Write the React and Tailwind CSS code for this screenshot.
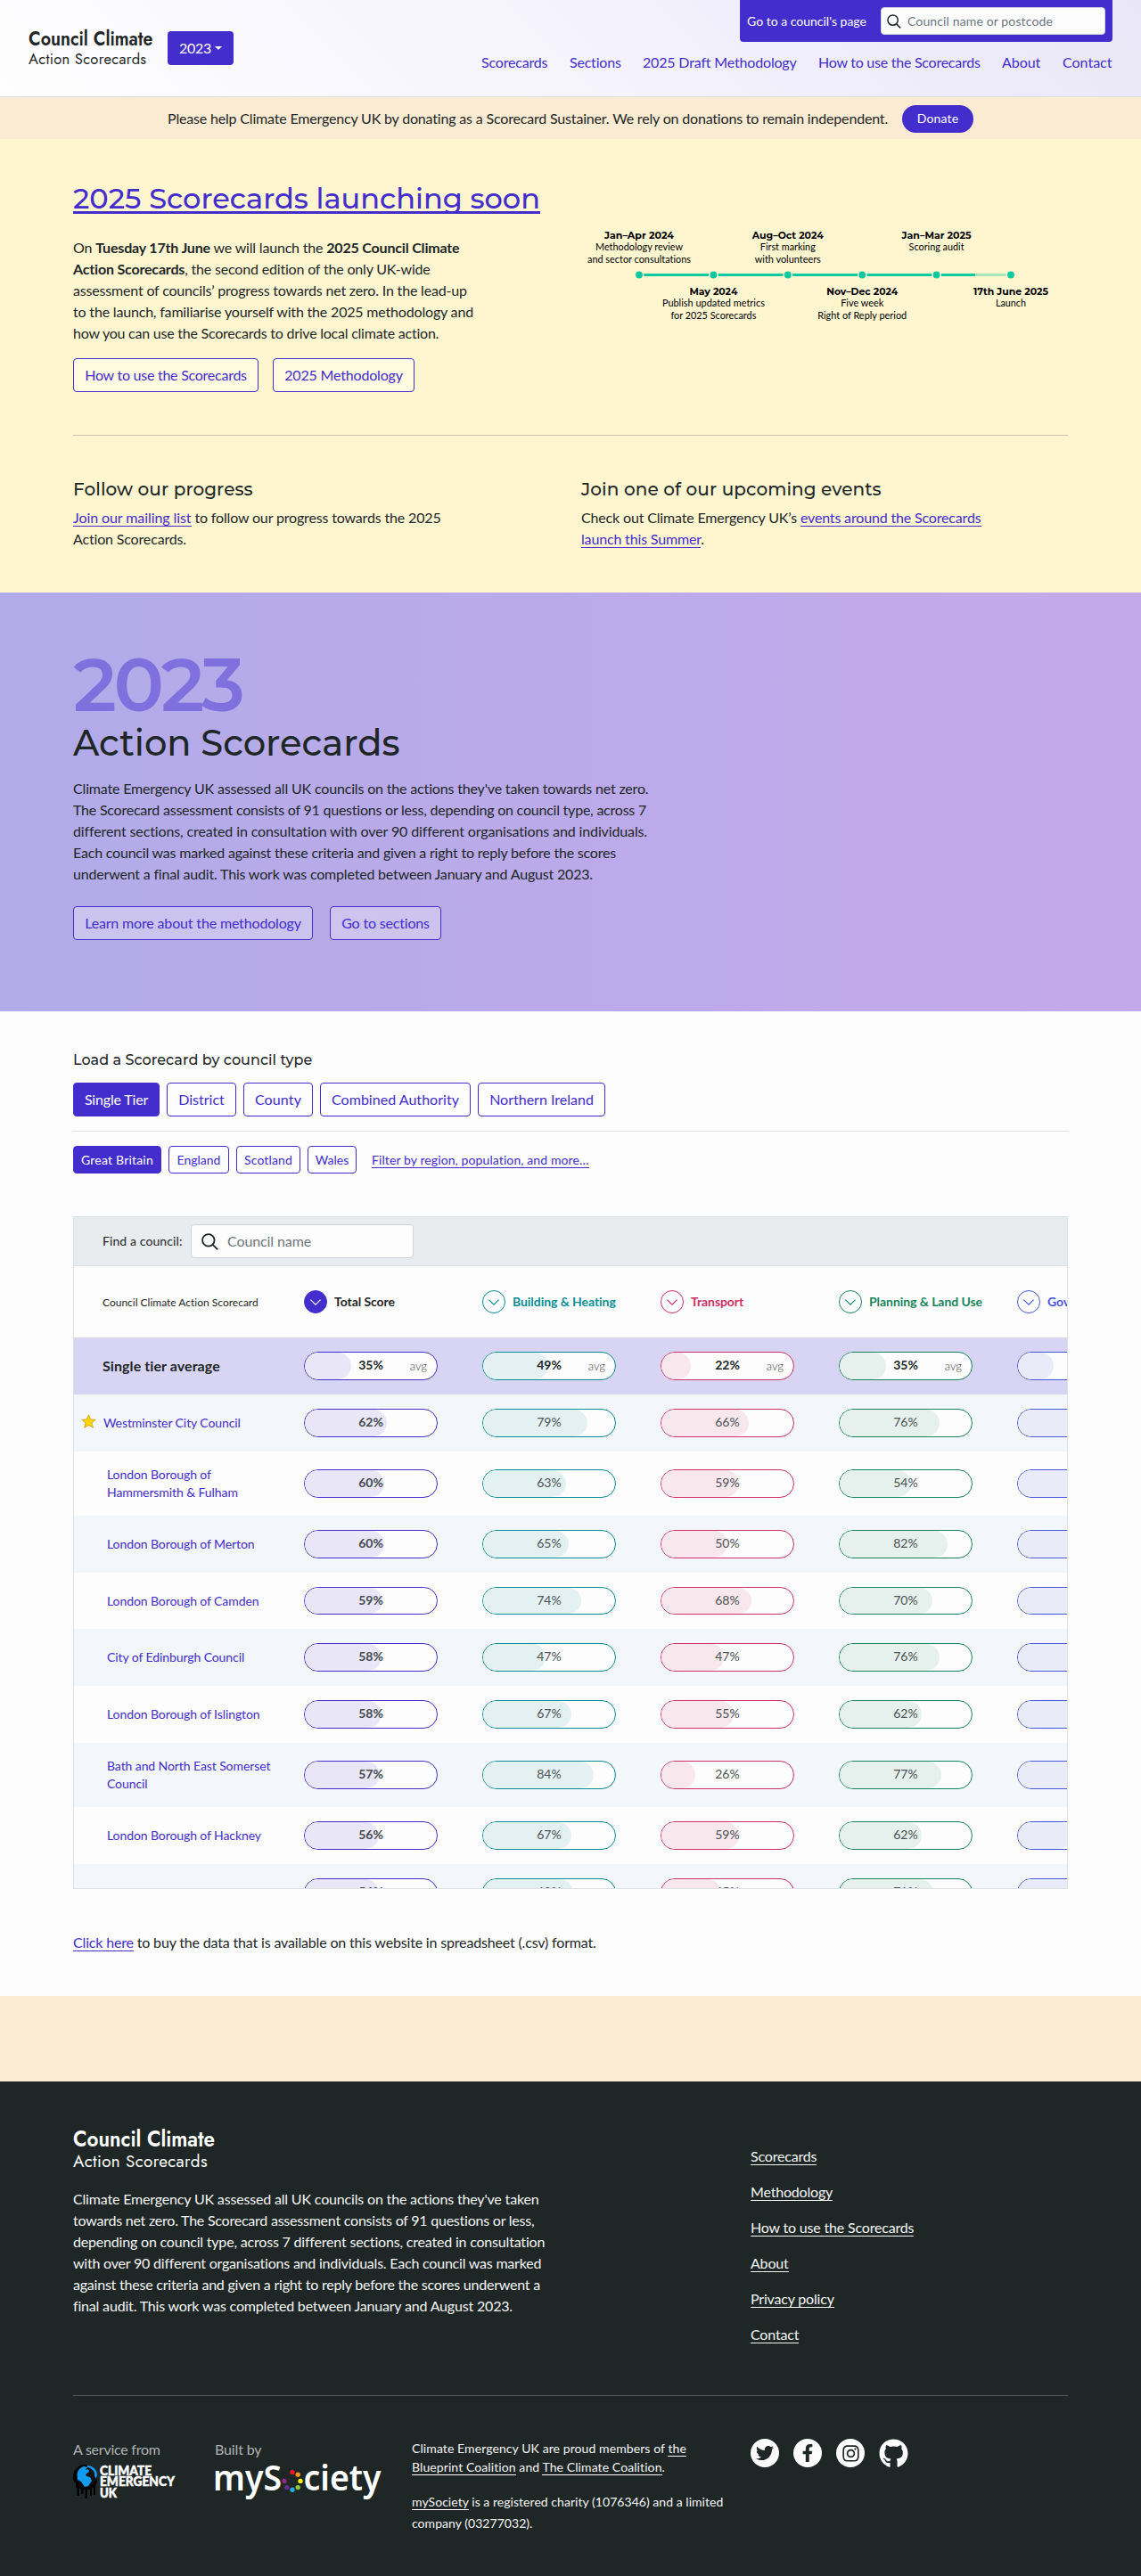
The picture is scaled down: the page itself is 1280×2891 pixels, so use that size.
import { FaTwitter, FaFacebookF, FaInstagram, FaGithub } from "react-icons/fa";

function Lines({ lines, className = "" }) {
  return (
    <p className={"whitespace-nowrap leading-6 " + className}>
      {lines.map(([text, tracking]) => (
        <span key={text} className={"block " + tracking}>{text}</span>
      ))}
    </p>
  );
}

function SearchIcon({ size }) {
  return (
    <svg width={size} height={size} viewBox="0 0 16 16" fill="none" stroke="#1e2626" strokeWidth="1.5" className="shrink-0">
      <circle cx="6.6" cy="6.6" r="5.7" />
      <path d="M10.7 10.9 15.3 15.5" />
    </svg>
  );
}

function Logo({ scale, color }) {
  return (
    <svg width={142 * scale} height={42 * scale} viewBox="0 0 142 42" fill={color} className="block shrink-0 overflow-visible">
      <text x="0" y="18" fontFamily="Jost, Lato, sans-serif" fontWeight="600" fontSize="22.5" textLength="139.5" lengthAdjust="spacingAndGlyphs">Council Climate</text>
      <text x="0" y="39" fontFamily="Jost, Lato, sans-serif" fontSize="16.5" textLength="132" style={{ fontVariantLigatures: "none" }}>Action Scorecards</text>
    </svg>
  );
}

const nav = [
  ["Scorecards", "w-[75px] tracking-[-0.18px]"],
  ["Sections", "w-[58px] tracking-[-0.2px]"],
  ["2025 Draft Methodology", "w-[173px] tracking-[-0.17px]"],
  ["How to use the Scorecards", "w-[182px] tracking-[-0.25px]"],
  ["About", "w-[44px] tracking-[-0.04px]"],
  ["Contact", "w-[56px]"],
];

function Header() {
  return (
    <header className="flex h-[109px] justify-between border-b border-[#dee2e6] bg-[linear-gradient(45deg,#fefefe_0%,#f5f3fd_50%,#e9e6f7_100%)] px-8">
      <div className="flex pt-[33px]">
        <Logo scale={1} color="#1e2626" />
        <button className="ml-[14px] mt-[2px] flex h-[38px] w-[74px] items-center justify-center rounded bg-[#432dcc] tracking-[-0.28px] text-white">
          2023
          <span className="ml-1 border-x-[4.8px] border-t-[4.8px] border-x-transparent border-t-white" />
        </button>
      </div>
      <div className="flex flex-col items-end">
        <div className="flex h-[47px] w-[418px] items-center rounded-b bg-[#432dcc] px-2">
          <span className="w-[150px] text-sm text-white">Go to a council's page</span>
          <div className="flex h-[31px] w-[252px] items-center rounded border border-[#ced4da] bg-[#fdfdfd] pl-1.5">
            <SearchIcon size={16} />
            <span className="ml-[7px] text-sm tracking-[0.13px] text-[#6c757d]">Council name or postcode</span>
          </div>
        </div>
        <nav className="mt-[11px] flex gap-6 whitespace-nowrap leading-6 text-[#432dcc]">
          {nav.map(([t, c]) => (
            <a key={t} className={c}>{t}</a>
          ))}
        </nav>
      </div>
    </header>
  );
}

function Banner() {
  return (
    <div className="flex h-[47px] items-center bg-[#fcebd3] pl-[188px]">
      <span className="w-[824px] whitespace-nowrap tracking-[-0.177px]">
        Please help Climate Emergency UK by donating as a Scorecard Sustainer. We rely on donations to remain independent.
      </span>
      <a className="mt-px flex h-[31px] w-20 items-center justify-center rounded-full bg-[#432dcc] text-sm tracking-[0.15px] text-white">Donate</a>
    </div>
  );
}

function OutlineButton({ children, className = "" }) {
  return (
    <a className={"flex h-[38px] items-center justify-center whitespace-nowrap rounded border border-[#432dcc] text-[#432dcc] " + className}>
      {children}
    </a>
  );
}

function Link({ children, className = "" }) {
  return <a className={"border-b border-[#432dcc] text-[#432dcc] " + className}>{children}</a>;
}

const steps = [
  { x: 77, w: 78, title: "Jan–Apr 2024", top: true, lines: [["Methodology review", 98], ["and sector consultations", 116]] },
  { x: 160.4, w: 54, title: "May 2024", lines: [["Publish updated metrics", 115], ["for 2025 Scorecards", 96]] },
  { x: 243.8, w: 80, title: "Aug–Oct 2024", top: true, lines: [["First marking", 62], ["with volunteers", 74]] },
  { x: 327.2, w: 80, title: "Nov–Dec 2024", lines: [["Five week", 48], ["Right of Reply period", 100]] },
  { x: 410.6, w: 78, title: "Jan–Mar 2025", top: true, lines: [["Scoring audit", 62]] },
  { x: 494, w: 84, title: "17th June 2025", lines: [["Launch", 34]] },
];

function Timeline() {
  return (
    <svg width="558" height="120" viewBox="0 0 558 120" className="block" textAnchor="middle">
      {steps.slice(1).map((s, i) => (
        <line key={s.x} x1={steps[i].x + 5.3} x2={s.x - 5.3} y1="58.5" y2="58.5" strokeWidth="3" stroke={i === 4 ? "#a9e5bb" : "#0ec99f"} />
      ))}
      <line x1="415.9" x2="454" y1="58.5" y2="58.5" strokeWidth="3" stroke="#0ec99f" />
      {steps.map((s) => {
        const y = s.top ? 18 : 81;
        return (
          <g key={s.x}>
            <circle cx={s.x} cy="58.5" r="3.9" fill="#0ec99f" />
            <text x={s.x} y={y} fontFamily="Montserrat, Lato, sans-serif" fontWeight="700" fontSize="11" textLength={s.w} lengthAdjust="spacingAndGlyphs">{s.title}</text>
            {s.lines.map(([t, w], i) => (
              <text key={t} x={s.x} y={y + 13.3 * (i + 1)} fontFamily="Lato, sans-serif" fontSize="11" textLength={w} lengthAdjust="spacingAndGlyphs">{t}</text>
            ))}
          </g>
        );
      })}
    </svg>
  );
}

function Launch() {
  return (
    <section className="h-[509px] bg-[#fff6d0] px-[82px] pt-[47px]">
      <div className="flex">
        <div className="w-[558px]">
          <h2 className="flex">
            <a className="h-[37px] whitespace-nowrap border-b-[3px] border-[#432dcc] font-[Montserrat,Lato,sans-serif] text-[32px] font-medium leading-[40px] tracking-[0.02px] text-[#432dcc]">
              2025 Scorecards launching soon
            </a>
          </h2>
          <p className="mt-[26px] whitespace-nowrap leading-6 tracking-[-0.18px]">
            <span className="block">On <b>Tuesday 17th June</b> we will launch the <b>2025 Council Climate</b></span>
            <span className="block"><b>Action Scorecards</b>, the second edition of the only UK-wide</span>
            <span className="block">assessment of councils’ progress towards net zero. In the lead-up</span>
            <span className="block">to the launch, familiarise yourself with the 2025 methodology and</span>
            <span className="block tracking-[-0.23px]">how you can use the Scorecards to drive local climate action.</span>
          </p>
          <div className="mt-[16px] flex gap-4">
            <OutlineButton className="w-[208px] bg-[#fffae0] tracking-[-0.25px]">How to use the Scorecards</OutlineButton>
            <OutlineButton className="w-[159px] bg-[#fffae0] tracking-[-0.17px]">2025 Methodology</OutlineButton>
          </div>
        </div>
        <div className="pt-[47px]"><Timeline /></div>
      </div>
      <div className="mt-12 border-t border-[#c9c3a9]" />
      <div className="mt-12 flex whitespace-nowrap leading-6">
        <div className="w-[570px]">
          <h3 className="mb-2 font-[Montserrat,Lato,sans-serif] text-xl font-medium leading-6 tracking-[0.08px]">Follow our progress</h3>
          <p className="tracking-[-0.16px]">
            <Link className="tracking-[-0.08px]">Join our mailing list</Link> to follow our progress towards the 2025<br />Action Scorecards.
          </p>
        </div>
        <div>
          <h3 className="mb-2 font-[Montserrat,Lato,sans-serif] text-xl font-medium leading-6 tracking-[0.08px]">Join one of our upcoming events</h3>
          <p className="tracking-[-0.16px]">
            Check out Climate Emergency UK’s <Link>events around the Scorecards</Link><br /><Link>launch this Summer</Link>.
          </p>
        </div>
      </div>
    </section>
  );
}

function Hero() {
  return (
    <section className="h-[470px] bg-[linear-gradient(90deg,#b2abe9_0%,#c4a9ea_100%)] px-[82px] pt-[61px]">
      <h1 className="font-[Montserrat,Lato,sans-serif]">
        <span className="block h-[84px] text-[84px] font-semibold leading-[84px] tracking-[-3.4px] text-[#8070dd]">2023</span>
        <span className="block h-12 text-[40px] font-medium leading-[48px]">Action Scorecards</span>
      </h1>
      <Lines
        className="mt-[15px]"
        lines={[
          ["Climate Emergency UK assessed all UK councils on the actions they've taken towards net zero.", "tracking-[-0.166px]"],
          ["The Scorecard assessment consists of 91 questions or less, depending on council type, across 7", "tracking-[-0.223px]"],
          ["different sections, created in consultation with over 90 different organisations and individuals.", "tracking-[-0.125px]"],
          ["Each council was marked against these criteria and given a right to reply before the scores", "tracking-[-0.202px]"],
          ["underwent a final audit. This work was completed between January and August 2023.", "tracking-[-0.186px]"],
        ]}
      />
      <div className="mt-6 flex gap-[19px]">
        <OutlineButton className="w-[269px] bg-white/30 tracking-[-0.16px]">Learn more about the methodology</OutlineButton>
        <OutlineButton className="w-[125px] bg-white/30 tracking-[-0.18px]">Go to sections</OutlineButton>
      </div>
    </section>
  );
}

const cols = [
  { name: "Total Score", text: "text-[#1e2626]", border: "border-[#432dcc]", fill: "bg-[#e9e6f7]", stroke: "#ffffff", circle: "border-[#432dcc] bg-[#432dcc]", bold: true },
  { name: "Building & Heating", text: "text-[#068d94]", border: "border-[#068d94]", fill: "bg-[#e4f1f3]", stroke: "#068d94", circle: "border-[#068d94]" },
  { name: "Transport", text: "text-[#cf2e66]", border: "border-[#cf2e66]", fill: "bg-[#f8e7ed]", stroke: "#cf2e66", circle: "border-[#cf2e66]" },
  { name: "Planning & Land Use", text: "text-[#17845b]", border: "border-[#17845b]", fill: "bg-[#e6f0ec]", stroke: "#17845b", circle: "border-[#17845b]" },
  { name: "Governance & Finance", text: "text-[#4857d8]", border: "border-[#4857d8]", fill: "bg-[#e9ebf9]", stroke: "#4857d8", circle: "border-[#4857d8]" },
];

const rows = [
  [["Westminster City Council"], [62, 79, 66, 76, 90], true],
  [["London Borough of", "Hammersmith & Fulham"], [60, 63, 59, 54, 80]],
  [["London Borough of Merton"], [60, 65, 50, 82, 80]],
  [["London Borough of Camden"], [59, 74, 68, 70, 80]],
  [["City of Edinburgh Council"], [58, 47, 47, 76, 80]],
  [["London Borough of Islington"], [58, 67, 55, 62, 80]],
  [["Bath and North East Somerset", "Council"], [57, 84, 26, 77, 80]],
  [["London Borough of Hackney"], [56, 67, 59, 62, 41]],
  [[""], [56, 68, 45, 71, 80]],
];

function Pill({ col, value, avg }) {
  return (
    <div className={"relative h-[31.6px] w-[150px] overflow-hidden rounded-full border bg-[#fdfdfd] " + col.border}>
      <div className={"h-full rounded-r-full " + col.fill} style={{ width: value + "%" }} />
      <span className={"absolute inset-x-0 top-[4px] text-center text-sm leading-5 " + (avg ? "font-bold" : col.bold ? "font-bold text-[#444a4e]" : "text-[#4b5154]")}>
        {value}%
      </span>
      {avg && <span className="absolute right-[11px] top-[5px] font-[Lato,sans-serif] text-[13px] font-light leading-5 text-[#444]">avg</span>}
    </div>
  );
}

function Star() {
  return (
    <svg width="17" height="16" viewBox="0 0 17 16" className="mb-1 mr-2 shrink-0">
      <path d="M8.5.8 10.7 5.9 16.2 6.3 12 9.9 13.4 15.2 8.5 12.4 3.6 15.2 5 9.9.8 6.3 6.3 5.9Z" fill="#fcd303" stroke="#c8a21a" strokeWidth=".8" strokeLinejoin="round" />
    </svg>
  );
}

function ScoreTable() {
  return (
    <div className="mt-12 h-[755px] overflow-hidden border border-[#dee2e6]">
      <div className="flex h-[55px] items-center border-b border-[#dce0e4] bg-[#e8ecee] pl-8">
        <span className="w-[99px] text-sm tracking-[0.1px]">Find a council:</span>
        <div className="flex h-[38px] w-[250px] items-center rounded border border-[#ced4da] bg-[#fdfdfd] pl-[11px]">
          <SearchIcon size={19} />
          <span className="ml-[10px] tracking-[-0.1px] text-[#6c757d]">Council name</span>
        </div>
      </div>
      <div className="w-[1258px]">
        <div className="flex h-20 items-center">
          <div className="w-[258px] pl-8 pt-0.5 text-xs">Council Climate Action Scorecard</div>
          {cols.map((c) => (
            <div key={c.name} className="flex w-[200px] items-center whitespace-nowrap">
              <span className={"mr-2 flex h-[26px] w-[26px] items-center justify-center rounded-full border " + c.circle}>
                <svg width="12" height="7" viewBox="0 0 12 7" fill="none" stroke={c.stroke} strokeWidth="1.1"><path d="M.4.6 6 6.2 11.6.6" /></svg>
              </span>
              <span className={"text-sm font-bold tracking-[-0.06px] " + c.text}>{c.name}</span>
            </div>
          ))}
        </div>
        <div className="flex h-16 items-center bg-[#d8d5f4]">
          <div className="w-[258px] pl-8 font-bold tracking-[0.08px]">Single tier average</div>
          {[35, 49, 22, 35, 27].map((v, i) => (
            <div key={i} className="w-[200px]"><Pill col={cols[i]} value={v} avg /></div>
          ))}
        </div>
        {rows.map(([name, vals, star], r) => (
          <div key={r} className={"flex items-center " + (name.length > 1 ? "h-[72.7px] " : "h-[63.6px] ") + (r % 2 ? "" : "bg-[#f3f6fb]")}>
            <div className={"flex w-[258px] items-center text-sm leading-5 tracking-[-0.09px] text-[#432dcc] " + (star ? "pl-2" : "pl-[37px]")}>
              {star && <Star />}
              <span>{name.map((n) => <span key={n} className="block">{n}</span>)}</span>
            </div>
            {vals.map((v, i) => (
              <div key={i} className="w-[200px]"><Pill col={cols[i]} value={v} /></div>
            ))}
          </div>
        ))}
      </div>
    </div>
  );
}

const tiers = [
  ["Single Tier", "w-[97px] bg-[#432dcc] !text-white tracking-[-0.17px]"],
  ["District", "w-[78px]"],
  ["County", "w-[78px] tracking-[0.14px]"],
  ["Combined Authority", "w-[169px] tracking-[0.03px]"],
  ["Northern Ireland", "w-[143px]"],
];
const nations = [
  ["Great Britain", "w-[99px] bg-[#432dcc] text-white tracking-[0.2px]"],
  ["England", "w-[68px] text-[#432dcc]"],
  ["Scotland", "w-[72px] text-[#432dcc] tracking-[0.14px]"],
  ["Wales", "w-[55px] text-[#432dcc]"],
];

function Scores() {
  return (
    <section className="h-[1105px] px-[82px] pt-[43px]">
      <h3 className="font-[Montserrat,Lato,sans-serif] font-medium leading-6 tracking-[0.06px]">Load a Scorecard by council type</h3>
      <div className="mt-[13px] flex gap-2">
        {tiers.map(([t, c]) => <OutlineButton key={t} className={c}>{t}</OutlineButton>)}
      </div>
      <div className="mt-4 flex items-center gap-2 border-t border-[#dee2e6] pt-4 text-sm">
        {nations.map(([t, c]) => (
          <a key={t} className={"flex h-[31px] items-center justify-center rounded border border-[#432dcc] " + c}>{t}</a>
        ))}
        <Link className="ml-[9px] leading-[17px] tracking-[0.1px]">Filter by region, population, and more…</Link>
      </div>
      <ScoreTable />
      <p className="mt-12 leading-6 tracking-[-0.168px]">
        <Link>Click here</Link> to buy the data that is available on this website in spreadsheet (.csv) format.
      </p>
    </section>
  );
}

function CeukLogo() {
  return (
    <svg width="116" height="42" viewBox="0 0 116 42" className="block">
      <path d="M0 16C0 7 6 1 14 1s13 6 13 14c0 5-1 8-2 10v10h-2v-8h-2v9h-2v-7h-3v10h-2.500V29h-2v5H9v-6H7v8H4.500V27H3v-5C1 20 0 18 0 16Z" fill="#000" />
      <circle cx="15" cy="13" r="11.500" fill="#111" />
      <path d="M4.600 11C6 6 9 4 12 3l4 1-2 3 3-1 1 3-4 3 1 2 4 1 2 4-4 6-4 1-4-6-4-2Z" fill="#109af0" />
      <path d="M16 1.700c6 0 11 5 11 11l-1 4-2-3c1-4-2-8-8-10Z" fill="#109af0" />
      <g fill="#fff" fontFamily="Lato, sans-serif" fontWeight="900" fontSize="14.500" stroke="#fff" strokeWidth=".5">
        <text x="30" y="12.500" textLength="58" lengthAdjust="spacingAndGlyphs">CLIMATE</text>
        <text x="30" y="25.200" textLength="84" lengthAdjust="spacingAndGlyphs">EMERGENCY</text>
        <text x="30" y="37.700" textLength="19" lengthAdjust="spacingAndGlyphs">UK</text>
      </g>
    </svg>
  );
}

const dots = [["87", "14.500", "#ed1c24"], ["93.200", "17.300", "#f7941d"], ["96", "24.400", "#fff200"], ["93.200", "31.600", "#8cc63f"], ["87", "34.300", "#29abe2"], ["80.800", "31.600", "#662d91"], ["78", "24.400", "#92278f"]];

function MySocietyLogo() {
  return (
    <svg width="190" height="48" viewBox="0 0 190 48" className="block" fill="#fff" fontFamily="'Noto Sans', sans-serif" fontWeight="600" fontSize="40">
      <text x="-2" y="34.700" textLength="77" lengthAdjust="spacingAndGlyphs">myS</text>
      {dots.map(([x, y, c]) => <circle key={c} cx={x} cy={y} r="2.700" fill={c} />)}
      <text x="99.500" y="34.700" textLength="87" lengthAdjust="spacingAndGlyphs">ciety</text>
    </svg>
  );
}

function FooterLink({ children }) {
  return <a className="border-b border-white">{children}</a>;
}

function Social({ children }) {
  return <a className="flex h-8 w-8 items-center justify-center rounded-full bg-[#fdfdfd] text-[#1e2626]">{children}</a>;
}

function Footer() {
  return (
    <footer className="h-[555px] bg-[#1e2626] px-[82px] pt-[52px] text-[#f4f5f5]">
      <div className="flex h-[300px]">
        <div className="w-[760px]">
          <Logo scale={1.14} color="#ffffff" />
          <Lines
            className="mt-[20px]"
            lines={[
              ["Climate Emergency UK assessed all UK councils on the actions they've taken", "tracking-[-0.17px]"],
              ["towards net zero. The Scorecard assessment consists of 91 questions or less,", "tracking-[-0.23px]"],
              ["depending on council type, across 7 different sections, created in consultation", "tracking-[-0.19px]"],
              ["with over 90 different organisations and individuals. Each council was marked", "tracking-[-0.21px]"],
              ["against these criteria and given a right to reply before the scores underwent a", "tracking-[-0.22px]"],
              ["final audit. This work was completed between January and August 2023.", "tracking-[-0.18px]"],
            ]}
          />
        </div>
        <ul className="mt-[20px] flex flex-col gap-4 leading-6 tracking-[-0.18px]">
          {["Scorecards", "Methodology", "How to use the Scorecards", "About", "Privacy policy", "Contact"].map((t) => (
            <li key={t} className="h-6"><FooterLink>{t}</FooterLink></li>
          ))}
        </ul>
      </div>
      <div className="border-t border-[#4f5757]" />
      <div className="flex pt-12">
        <div className="w-[159px] text-[#aeb2b2]">
          <p className="mb-1 h-6 leading-6 tracking-[-0.24px]">A service from</p>
          <CeukLogo />
        </div>
        <div className="w-[221px] text-[#aeb2b2]">
          <p className="-mb-[1px] h-6 leading-6 tracking-[-0.14px]">Built by</p>
          <MySocietyLogo />
        </div>
        <div className="w-[380px] whitespace-nowrap text-sm leading-[21px] tracking-[0.09px]">
          <p>
            Climate Emergency UK are proud members of <FooterLink>the</FooterLink><br />
            <FooterLink>Blueprint Coalition</FooterLink> and <FooterLink>The Climate Coalition</FooterLink>.
          </p>
          <p className="mt-[17px] leading-6 tracking-[0.04px]">
            <FooterLink>mySociety</FooterLink> is a registered charity (1076346) and a limited<br />company (03277032).
          </p>
        </div>
        <div className="flex gap-4">
          <Social><FaTwitter size={20} /></Social>
          <Social><FaFacebookF size={20} /></Social>
          <Social><FaInstagram size={21} /></Social>
          <FaGithub size={33} color="#fdfdfd" />
        </div>
      </div>
    </footer>
  );
}

export default function App() {
  return (
    <div className="w-[1280px] bg-[#fdfdfd] font-[Lato,sans-serif] text-base text-[#1e2626] [font-variant-ligatures:none]">
      <Header />
      <Banner />
      <Launch />
      <Hero />
      <Scores />
      <div className="h-24 bg-[#fcebd3]" />
      <Footer />
    </div>
  );
}
